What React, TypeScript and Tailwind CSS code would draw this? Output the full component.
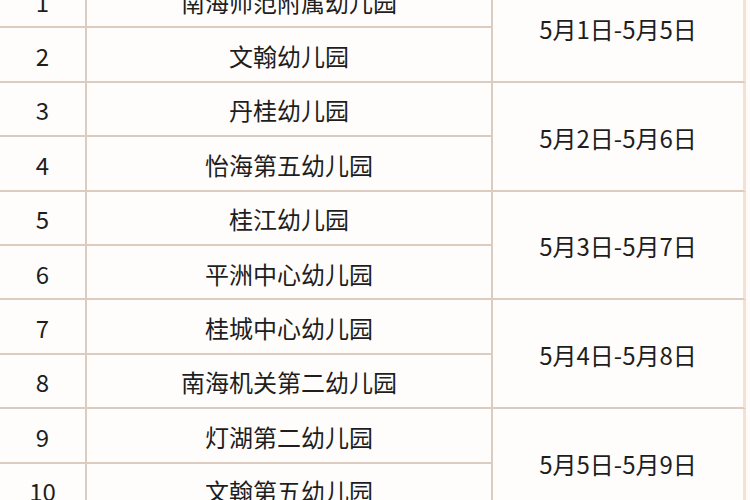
const groups = [
  { date: "5月1日-5月5日", items: [["1", "南海师范附属幼儿园"], ["2", "文翰幼儿园"]] },
  { date: "5月2日-5月6日", items: [["3", "丹桂幼儿园"], ["4", "怡海第五幼儿园"]] },
  { date: "5月3日-5月7日", items: [["5", "桂江幼儿园"], ["6", "平洲中心幼儿园"]] },
  { date: "5月4日-5月8日", items: [["7", "桂城中心幼儿园"], ["8", "南海机关第二幼儿园"]] },
  { date: "5月5日-5月9日", items: [["9", "灯湖第二幼儿园"], ["10", "文翰第五幼儿园"]] },
];

export default function App() {
  return (
    <div className="w-[750px] h-[500px] overflow-hidden bg-[#fffdfb] text-[#1e1e1e] font-['Noto_Sans_CJK_SC','Noto_Sans',sans-serif] text-[24px]">
      <div className="-mt-[26px] flex flex-col">
        {groups.map((g) => (
          <div key={g.date} className="flex">
            <div className="flex flex-col">
              {g.items.map(([no, name]) => (
                <div key={no} className="flex h-[54.4px]">
                  <div className="w-[87px] flex items-center justify-center border-b-2 border-r-2 border-[#dccbbf] pt-[3px]">
                    {no}
                  </div>
                  <div className="w-[406px] flex items-center justify-center border-b-2 border-r-2 border-[#dccbbf] pt-[3px]">
                    {name}
                  </div>
                </div>
              ))}
            </div>
            <div className="w-[253px] flex items-center justify-center border-b-2 border-b-[#dccbbf] border-r-[3px] border-r-[#f6e0d2] pt-[3px]">
              {g.date}
            </div>
          </div>
        ))}
      </div>
    </div>
  );
}
